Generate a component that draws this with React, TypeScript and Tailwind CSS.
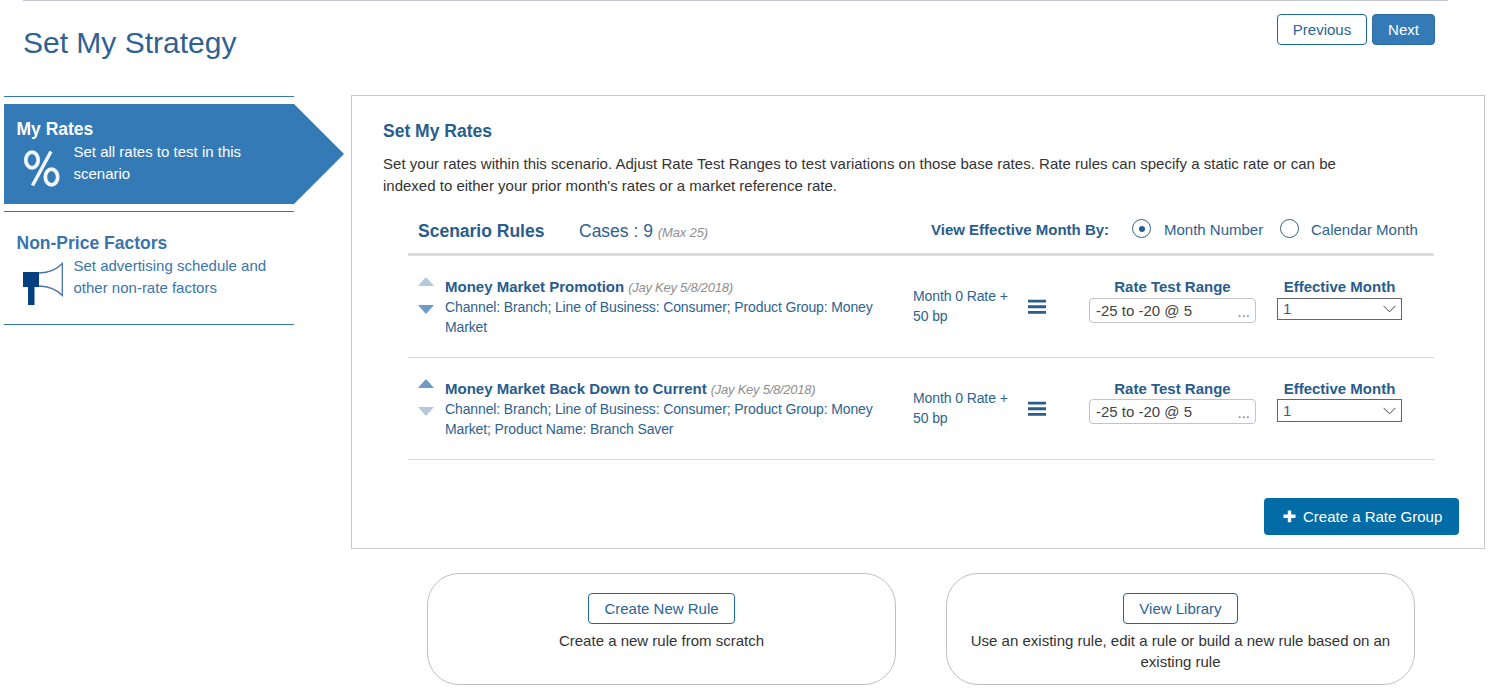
type Rule = {
  name: string;
  author: string;
  lines: string[];
  canMoveUp: boolean;
  canMoveDown: boolean;
};

const rules: Rule[] = [
  {
    name: "Money Market Promotion",
    author: "(Jay Key 5/8/2018)",
    lines: ["Channel: Branch; Line of Business: Consumer; Product Group: Money", "Market"],
    canMoveUp: false,
    canMoveDown: true,
  },
  {
    name: "Money Market Back Down to Current",
    author: "(Jay Key 5/8/2018)",
    lines: [
      "Channel: Branch; Line of Business: Consumer; Product Group: Money",
      "Market; Product Name: Branch Saver",
    ],
    canMoveUp: true,
    canMoveDown: false,
  },
];

function Arrow({ down, active }: { down?: boolean; active: boolean }) {
  return (
    <svg width="16" height="9" viewBox="0 0 16 9" className={active ? "fill-[#6f9bc4]" : "fill-[#b3c9de]"}>
      <path d={down ? "M0 0H16L9 8Q8 9 7 8Z" : "M0 9H16L9 1Q8 0 7 1Z"} />
    </svg>
  );
}

function Megaphone() {
  return (
    <svg width="42" height="44" viewBox="0 0 42 44" fill="none">
      <path d="M1 10H17V25H12.500V43H6V25H1Z" fill="#04407f" />
      <path d="M17 11Q32 10.500 40.300 1.500V33.500Q32 24.500 17 24" stroke="#4a74a6" strokeWidth="1.300" />
    </svg>
  );
}

function OutlineButton({ children, className }: { children: string; className: string }) {
  return (
    <button
      className={`flex h-[31px] items-center justify-center rounded-[4px] border border-[#1b66a5] text-[#2a6499] ${className}`}
    >
      {children}
    </button>
  );
}

function RuleRow({ rule, labelHeight, selectHeight }: { rule: Rule; labelHeight: string; selectHeight: string }) {
  return (
    <div className="flex h-[102px] border-b border-[#d9d9d9] text-[#2e6290]">
      <div className="flex w-[37px] flex-col gap-[19px] pt-[21px] pl-[10px]">
        <Arrow active={rule.canMoveUp} />
        <Arrow down active={rule.canMoveDown} />
      </div>
      <div className="w-[468px] pt-[21px] text-[14px] leading-5">
        <div className="flex h-5 gap-[4px] leading-5">
          <span className="text-[15px] font-bold text-[#285d8d]">{rule.name}</span>
          <span className="pt-px text-[13px] tracking-[-0.25px] text-[#8f8f8f] italic">{rule.author}</span>
        </div>
        {rule.lines.map((line) => (
          <div key={line} className="tracking-[-0.125px]">
            {line}
          </div>
        ))}
      </div>
      <div className="w-[115px] pt-[30px] text-[14px] leading-5 tracking-[-0.1px]">
        <div>Month 0 Rate +</div>
        <div>50 bp</div>
      </div>
      <svg width="18" height="16" viewBox="0 0 18 16" className="mt-[43px] fill-[#285d8d]">
        <path d="M0 0.800H18V3.500H0ZM0 6.300H18V9.200H0ZM0 12H18V14.800H0Z" />
      </svg>
      <div className="ml-[43px] w-[167px] pt-[20px]">
        <div className={`text-center font-bold text-[#285d8d] ${labelHeight}`}>Rate Test Range</div>
        <div className="flex h-[25px] items-center justify-between rounded-[4px] border border-[#c4c4c4] pr-[5px] pl-[6px] text-[#444]">
          <span>-25 to -20 @ 5</span>
          <span className="pt-[2px] text-[#777]">...</span>
        </div>
      </div>
      <div className="ml-[21px] w-[125px] pt-[20px]">
        <div className={`text-center font-bold text-[#285d8d] ${labelHeight}`}>Effective Month</div>
        <div className={`flex items-center justify-between border border-[#666] px-[5px] ${selectHeight}`}>
          <span>1</span>
          <svg width="13" height="8" viewBox="0 0 13 8" fill="none" stroke="#444">
            <path d="M0.500 0.800L6.500 6.800L12.500 0.800" />
          </svg>
        </div>
      </div>
    </div>
  );
}

export default function App() {
  return (
    <div className="h-[691px] w-[1494px] overflow-hidden bg-white font-['Liberation_Sans',Arial,sans-serif] text-[15px] leading-[22px] whitespace-nowrap text-[#333]">
      <header className="mr-[46px] ml-[23px] flex h-[95px] justify-between border-t border-[#c6c8d6]">
        <h1 className="pt-[23px] text-[30px] leading-[38px] text-[#2f6193]">Set My Strategy</h1>
        <div className="flex gap-[5px] pt-[13px] pr-[13px]">
          <OutlineButton className="w-[90px]">Previous</OutlineButton>
          <button className="flex h-[31px] w-[63px] items-center justify-center rounded-[4px] border border-[#2e6da4] bg-[#337ab7] text-white">
            Next
          </button>
        </div>
      </header>

      <div className="flex">
        <nav className="ml-1 w-[347px] pt-px">
          <div className="h-[8px] w-[290px] border-t border-[#337ab7]" />
          <div className="flex h-[100px]">
            <div className="w-[290px] bg-[#337ab7] pt-[14px] pl-[12.500px] text-white">
              <div className="pb-px text-[17.500px] font-bold">My Rates</div>
              <div className="flex">
                <div className="w-[57px] pt-[9px] pl-[6px]">
                  <svg width="38" height="37" viewBox="0 0 38 37" fill="none" stroke="#f2f8fd" strokeWidth="3.700">
                    <ellipse cx="9" cy="10" rx="6.200" ry="7.800" />
                    <ellipse cx="28.500" cy="27" rx="6.200" ry="7.800" />
                    <path d="M28 1.500L9.500 35.500" strokeWidth="3.500" />
                  </svg>
                </div>
                <div>
                  <div>Set all rates to test in this</div>
                  <div>scenario</div>
                </div>
              </div>
            </div>
            <svg width="50" height="100" viewBox="0 0 50 100" className="fill-[#337ab7]">
              <path d="M0 0L50 50L0 100Z" />
            </svg>
          </div>
          <div className="mt-[7px] h-[114px] w-[290px] border-y border-[#337ab7] pt-5 pl-[12.500px] text-[#3a74ad]">
            <div className="pb-px text-[17.500px] font-bold">Non-Price Factors</div>
            <div className="flex">
              <div className="w-[57px] pt-[7px] pl-[5.500px]">
                <Megaphone />
              </div>
              <div>
                <div>Set advertising schedule and</div>
                <div>other non-rate factors</div>
              </div>
            </div>
          </div>
        </nav>

        <main className="h-[454px] w-[1134px] border border-[#c8c8cc] pl-[31px]">
          <h2 className="pt-6 text-[17.500px] font-bold text-[#285d8d]">Set My Rates</h2>
          <div className="pt-[11px]">
            <div className="tracking-[0.018px]">
              Set your rates within this scenario. Adjust Rate Test Ranges to test variations on those base rates. Rate
              rules can specify a static rate or can be
            </div>
            <div>indexed to either your prior month's rates or a market reference rate.</div>
          </div>
          <section className="ml-[25px] w-[1026px]">
            <div className="flex h-[59px] border-b-3 border-[#dcdcdc] pt-[22px] text-[#2e6290]">
              <div className="w-[171px] pl-[10px] text-[17.500px] leading-6 font-bold text-[#285d8d]">
                Scenario Rules
              </div>
              <div className="w-[352px] text-[17.500px] leading-6">
                Cases : 9 <span className="text-[13px] tracking-[-0.15px] text-[#8f8f8f] italic">(Max 25)</span>
              </div>
              <div className="w-[201px] font-bold text-[#285d8d]">View Effective Month By:</div>
              <div className="flex w-[148px] gap-[13px]">
                <span className="flex size-[19px] items-center justify-center rounded-full border-[1.500px] border-[#2f6496]">
                  <span className="size-[6px] rounded-full bg-[#285d8d]" />
                </span>
                <span>Month Number</span>
              </div>
              <div className="flex gap-[12px]">
                <span className="size-[19px] rounded-full border-[1.500px] border-[#2f6496]" />
                <span>Calendar Month</span>
              </div>
            </div>
            {rules.map((rule, index) => (
              <RuleRow
                key={rule.name}
                rule={rule}
                labelHeight={index === 0 ? "h-[22px]" : "h-[21px]"}
                selectHeight={index === 0 ? "h-[22px]" : "h-[23px]"}
              />
            ))}
          </section>
          <div className="flex justify-end pt-[38px] pr-[25px]">
            <button className="flex h-[37px] w-[195px] items-center gap-[7px] rounded-[4px] bg-[#036ba6] pl-[19px] text-white">
              <svg width="13" height="14" viewBox="0 0 13 14" className="fill-white">
                <path d="M4.800 0.500H8.200V4.600H12.500V8H8.200V12.200H4.800V8H0.500V4.600H4.800Z" />
              </svg>
              Create a Rate Group
            </button>
          </div>
        </main>
      </div>

      <div className="flex gap-[50px] pt-6 pl-[427px] text-center leading-[21px]">
        <div className="flex h-[112px] w-[469px] flex-col items-center rounded-[32px] border border-[#c0c0c0] pt-[19px]">
          <OutlineButton className="w-[147px]">Create New Rule</OutlineButton>
          <div className="pt-[6px]">Create a new rule from scratch</div>
        </div>
        <div className="flex h-[112px] w-[469px] flex-col items-center rounded-[32px] border border-[#c0c0c0] pt-[19px]">
          <OutlineButton className="w-[115px]">View Library</OutlineButton>
          <div className="pt-[6px]">Use an existing rule, edit a rule or build a new rule based on an</div>
          <div>existing rule</div>
        </div>
      </div>
    </div>
  );
}
